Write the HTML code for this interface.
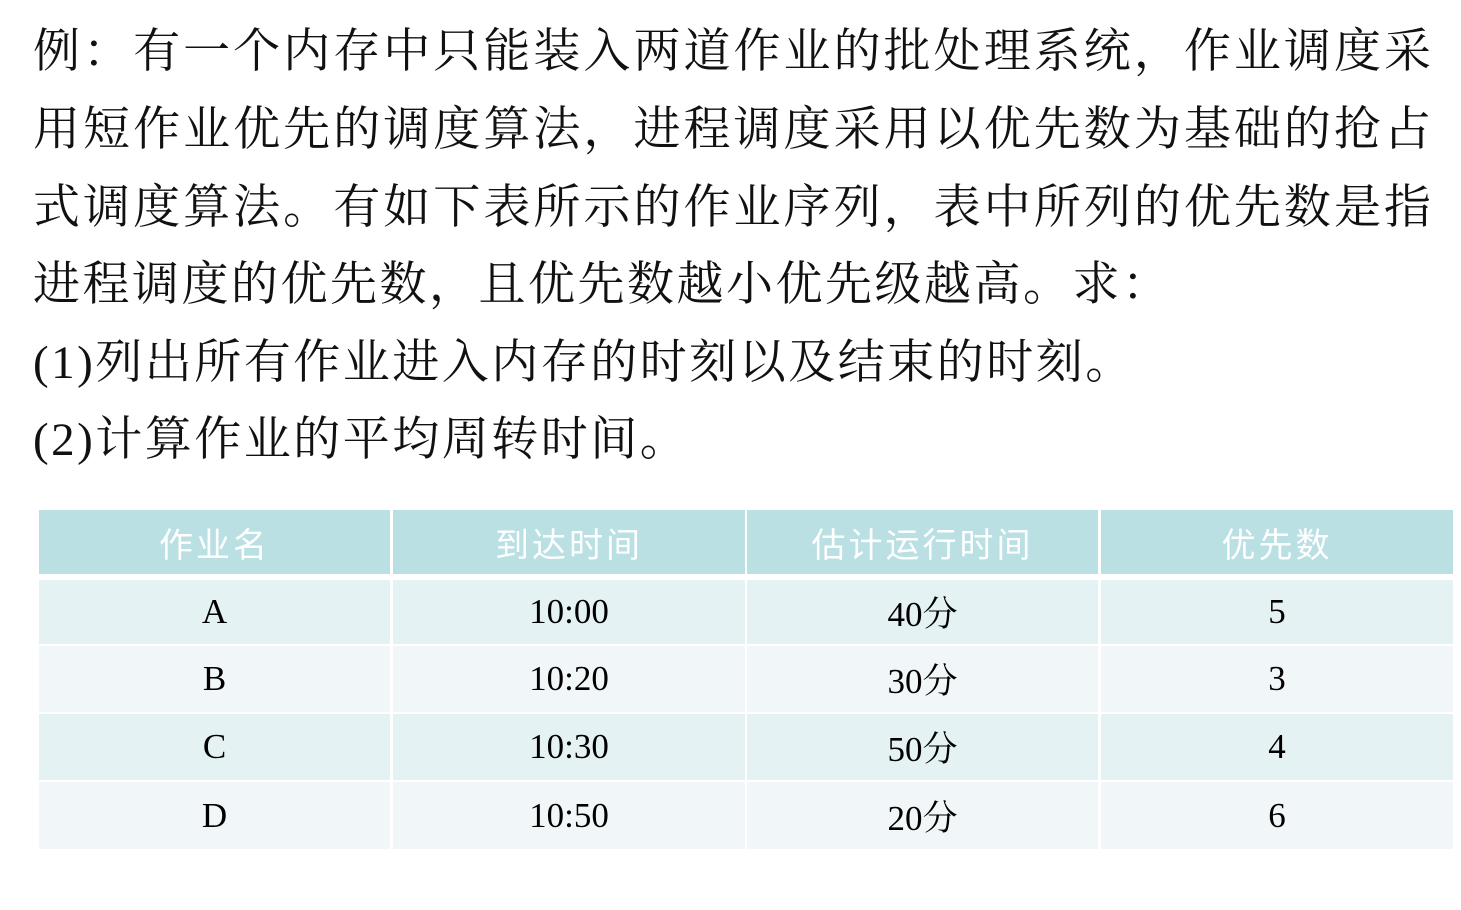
<!DOCTYPE html>
<html><head><meta charset="utf-8"><style>
body{margin:0;width:1461px;height:910px;background:#fff;overflow:hidden;font-family:"Liberation Serif","Noto Serif CJK SC",serif;}
.l{position:absolute;left:33px;width:1398px;font-size:47px;line-height:52px;color:#111;white-space:nowrap;}
.j{text-align:justify;text-align-last:justify;}
.f{width:auto;letter-spacing:2.5px;}
.c{position:absolute;display:flex;align-items:center;justify-content:center;font-size:35px;color:#000;}
.h{background:#bae0e3;color:#fff;font-family:"Liberation Sans","Noto Sans CJK SC",sans-serif;font-size:34px;letter-spacing:3px;}
.o{background:#e5f2f4}.e{background:#f1f7f9}
</style></head><body>
<div class="l j" style="top:26px">例：有一个内存中只能装入两道作业的批处理系统，作业调度采</div>
<div class="l j" style="top:104px">用短作业优先的调度算法，进程调度采用以优先数为基础的抢占</div>
<div class="l j" style="top:182px">式调度算法。有如下表所示的作业序列，表中所列的优先数是指</div>
<div class="l f" style="top:259px">进程调度的优先数，且优先数越小优先级越高。求：</div>
<div class="l f" style="top:337px">(1)列出所有作业进入内存的时刻以及结束的时刻。</div>
<div class="l f" style="top:414px">(2)计算作业的平均周转时间。</div>

<div class="c h" style="left:39px;top:510px;width:351px;height:64px">作业名</div>
<div class="c h" style="left:393px;top:510px;width:352px;height:64px">到达时间</div>
<div class="c h" style="left:747px;top:510px;width:351px;height:64px">估计运行时间</div>
<div class="c h" style="left:1101px;top:510px;width:352px;height:64px">优先数</div>

<div class="c o" style="left:39px;top:580px;width:351px;height:64px">A</div>
<div class="c o" style="left:393px;top:580px;width:352px;height:64px">10:00</div>
<div class="c o" style="left:747px;top:580px;width:351px;height:64px">40分</div>
<div class="c o" style="left:1101px;top:580px;width:352px;height:64px">5</div>

<div class="c e" style="left:39px;top:646px;width:351px;height:66px">B</div>
<div class="c e" style="left:393px;top:646px;width:352px;height:66px">10:20</div>
<div class="c e" style="left:747px;top:646px;width:351px;height:66px">30分</div>
<div class="c e" style="left:1101px;top:646px;width:352px;height:66px">3</div>

<div class="c o" style="left:39px;top:714px;width:351px;height:66px">C</div>
<div class="c o" style="left:393px;top:714px;width:352px;height:66px">10:30</div>
<div class="c o" style="left:747px;top:714px;width:351px;height:66px">50分</div>
<div class="c o" style="left:1101px;top:714px;width:352px;height:66px">4</div>

<div class="c e" style="left:39px;top:782px;width:351px;height:67px">D</div>
<div class="c e" style="left:393px;top:782px;width:352px;height:67px">10:50</div>
<div class="c e" style="left:747px;top:782px;width:351px;height:67px">20分</div>
<div class="c e" style="left:1101px;top:782px;width:352px;height:67px">6</div>
</body></html>
